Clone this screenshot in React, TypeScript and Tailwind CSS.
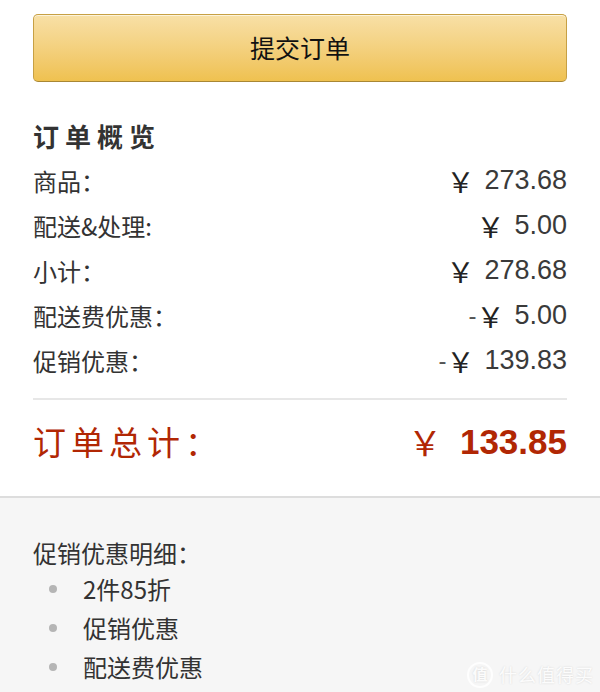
const cjk = '"Noto Sans CJK SC", "Liberation Sans", sans-serif'
const num = '"Liberation Sans", "Noto Sans CJK SC", sans-serif'

const rows = [
  { label: "商品：", sign: "", amount: "273.68" },
  { label: "配送&处理:", sign: "", amount: "5.00" },
  { label: "小计：", sign: "", amount: "278.68" },
  { label: "配送费优惠：", sign: "-", amount: "5.00" },
  { label: "促销优惠：", sign: "-", amount: "139.83" },
]

const details = ["2件85折", "促销优惠", "配送费优惠"]

export default function App() {
  return (
    <div className="relative h-[692px] w-[600px] overflow-hidden bg-white" style={{ fontFamily: cjk }}>
      <div className="px-[33px] pt-[14px]">
        {/* submit button */}
        <button className="flex h-[68px] w-full items-center justify-center rounded-[5px] border border-[#c7a044] border-b-[#a88734] bg-gradient-to-b from-[#f8e0a6] to-[#efc14f] text-[25px] text-[#111] shadow-[inset_0_1px_0_rgba(255,255,255,0.6)]">
          提交订单
        </button>

        <h2 className="mt-[38px] text-[26px] leading-[32px] font-bold tracking-[6px] text-[#333]">订单概览</h2>

        <div className="mt-[6px]">
          {rows.map((row) => (
            <div key={row.label} className="flex h-[45px] items-center justify-between text-[#333]">
              <span className="text-[24px]">{row.label}</span>
              <span className="flex items-center">
                {row.sign && <span className="text-[24px] text-[#555]" style={{ fontFamily: num }}>{row.sign}</span>}
                <span className="text-[28px] leading-none text-[#222]" style={{ fontFamily: cjk }}>￥</span>
                <span className="ml-[10px] text-[27px] text-[#3a3a3a]" style={{ fontFamily: num }}>{row.amount}</span>
              </span>
            </div>
          ))}
        </div>

        <div className="mt-[15px] h-[2px] bg-[#e7e7e7]" />

        <div className="flex h-[96px] items-center justify-between pb-[12px] text-[#b12704]">
          <span className="text-[33px] tracking-[5px]">订单总计：</span>
          <span className="flex items-center">
            <span className="text-[34px] leading-none">￥</span>
            <span className="ml-[18px] text-[35px] font-bold" style={{ fontFamily: num }}>133.85</span>
          </span>
        </div>
      </div>

      {/* promotion detail */}
      <div className="h-full border-t-2 border-[#dddddd] bg-[#f6f6f6] px-[33px] pt-[38px] text-[#333]">
        <div className="text-[24px] leading-[34px]">促销优惠明细：</div>
        <ul className="mt-[-1px]">
          {details.map((d) => (
            <li key={d} className="flex h-[39px] items-center">
              <span className="ml-[16px] h-[8px] w-[8px] rounded-full bg-[#b5b5b5]" />
              <span className="ml-[26px] text-[24px]">{d}</span>
            </li>
          ))}
        </ul>
      </div>

      {/* watermark */}
      <div className="absolute right-[6px] bottom-[4px] flex items-center gap-[6px] text-white/90 [text-shadow:0_0_2px_rgba(0,0,0,0.15)]">
        <span className="flex h-[26px] w-[26px] items-center justify-center rounded-full border-2 border-white/90 text-[15px] font-bold">值</span>
        <span className="text-[18px] tracking-[1px]">什么值得买</span>
      </div>
    </div>
  )
}
